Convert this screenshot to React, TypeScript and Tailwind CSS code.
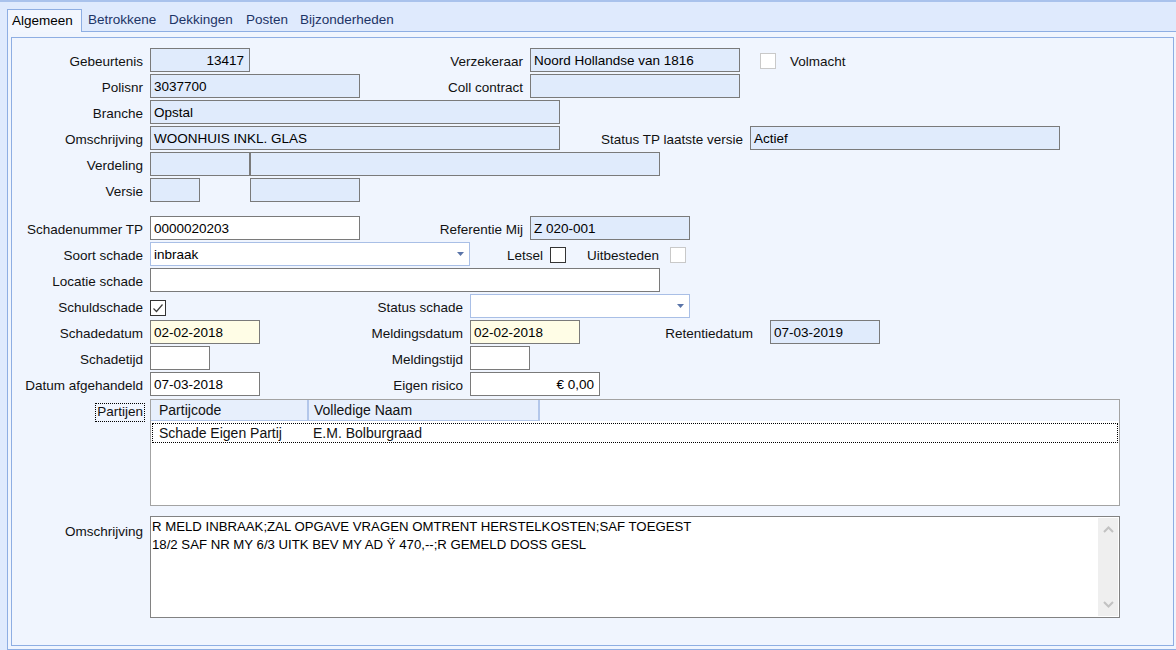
import React from "react";

const RO = "bg-[#e0ebfc] border-[#7a7a7a]";
const WH = "bg-white border-[#7a7a7a]";
const YE = "bg-[#fffde6] border-[#7a7a7a]";

function Lbl({ w, children, pr = "pr-[7px]" }: { w: string; children?: React.ReactNode; pr?: string }) {
  return (
    <div className={`${w} ${pr} shrink-0 h-[24px] pt-[4px] flex items-center justify-end whitespace-nowrap text-[#111]`}>
      {children}
    </div>
  );
}

function Box({ w, v, text, right, extra = "" }: { w: string; v: string; text?: string; right?: boolean; extra?: string }) {
  return (
    <div
      className={`${w} ${v} ${extra} shrink-0 h-[24px] border flex items-center px-[3px] leading-[15px] whitespace-nowrap overflow-hidden text-black ${
        right ? "justify-end pr-[5px]" : ""
      }`}
    >
      {text}
    </div>
  );
}

function Sel({ w }: { w: string }) {
  return (
    <div className={`${w} shrink-0 h-[24px] border border-[#a9bfe6] bg-white flex items-center justify-between pl-[3px] pr-[5px]`}>
      <span />
      <svg width="7" height="4" viewBox="0 0 7 4">
        <path d="M0 0 L7 0 L3.5 4 Z" fill="#5a74a8" />
      </svg>
    </div>
  );
}

function Chk({ dark, checked, extra = "" }: { dark?: boolean; checked?: boolean; extra?: string }) {
  return (
    <div
      className={`w-[16px] h-[16px] shrink-0 bg-white border ${dark ? "border-[#333]" : "border-[#c9c9c9]"} ${extra} flex items-center justify-center`}
    >
      {checked && (
        <svg width="12" height="12" viewBox="0 0 12 12">
          <path d="M1.5 6.5 L4.5 9.5 L10.5 2.5" fill="none" stroke="#3a3a3a" strokeWidth="1.2" />
        </svg>
      )}
    </div>
  );
}

function Row({ children, mt = "mt-[2px]" }: { children: React.ReactNode; mt?: string }) {
  return <div className={`flex items-start h-[24px] ${mt}`}>{children}</div>;
}

export default function App() {
  return (
    <div className="w-[1176px] h-[650px] overflow-hidden bg-[#dfeafd] border-t-2 border-[#a9c2ec] font-['Liberation_Sans',Arial,sans-serif] text-[13.5px]">
      {/* tabs */}
      <div className="h-[29px] flex items-end pl-[7px]">
        <div className="relative z-10 h-[23px] -mb-px w-[75px] border-t border-l border-r border-[#8eaee3] bg-[#f2f6fe] pl-[4px] flex items-center text-black">
          Algemeen
        </div>
        <div className="h-[22px] w-[81px] pl-[6px] flex items-center text-[#1d3466]">Betrokkene</div>
        <div className="h-[22px] w-[77px] pl-[6px] flex items-center text-[#1d3466]">Dekkingen</div>
        <div className="h-[22px] w-[54px] pl-[6px] flex items-center text-[#1d3466]">Posten</div>
        <div className="h-[22px] pl-[6px] flex items-center text-[#1d3466]">Bijzonderheden</div>
      </div>

      {/* outer panel */}
      <div className="ml-[7px] h-[619px] border-l border-t border-b border-[#8eaee3] bg-[#f0f5fe] pt-[5px] pl-[3px] pb-[3px] pr-[2px]">
        <div className="h-[609px] border border-[#8eaee3] bg-[#f0f5fe] pt-[10px]">
          <Row mt="mt-0">
            <Lbl w="w-[138px]">Gebeurtenis</Lbl>
            <Box w="w-[100px]" v={RO} text="13417" right />
            <Lbl w="w-[280px]">Verzekeraar</Lbl>
            <Box w="w-[210px]" v={RO} text="Noord Hollandse van 1816" />
            <Chk extra="ml-[20px] mt-[5px]" />
            <Lbl w="w-auto ml-[14px]" pr="pr-0">Volmacht</Lbl>
          </Row>
          <Row>
            <Lbl w="w-[138px]">Polisnr</Lbl>
            <Box w="w-[210px]" v={RO} text="3037700" />
            <Lbl w="w-[170px]">Coll contract</Lbl>
            <Box w="w-[210px]" v={RO} />
          </Row>
          <Row>
            <Lbl w="w-[138px]">Branche</Lbl>
            <Box w="w-[410px]" v={RO} text="Opstal" />
          </Row>
          <Row>
            <Lbl w="w-[138px]">Omschrijving</Lbl>
            <Box w="w-[410px]" v={RO} text="WOONHUIS INKL. GLAS" />
            <Lbl w="w-[190px]">Status TP laatste versie</Lbl>
            <Box w="w-[310px]" v={RO} text="Actief" />
          </Row>
          <Row>
            <Lbl w="w-[138px]">Verdeling</Lbl>
            <Box w="w-[100px]" v={RO} />
            <Box w="w-[410px]" v={RO} />
          </Row>
          <Row>
            <Lbl w="w-[138px]">Versie</Lbl>
            <Box w="w-[50px]" v={RO} />
            <Box w="w-[110px]" v={RO} extra="ml-[50px]" />
          </Row>

          <Row mt="mt-[14px]">
            <Lbl w="w-[138px]">Schadenummer TP</Lbl>
            <Box w="w-[210px]" v={WH} text="0000020203" />
            <Lbl w="w-[170px]">Referentie Mij</Lbl>
            <Box w="w-[160px]" v={RO} text="Z 020-001" />
          </Row>
          <Row>
            <Lbl w="w-[138px]">Soort schade</Lbl>
            <div className="w-[320px] shrink-0 h-[24px] border border-[#a9bfe6] bg-white flex items-center justify-between pl-[3px] pr-[5px] leading-[15px]">
              <span>inbraak</span>
              <svg width="7" height="4" viewBox="0 0 7 4">
                <path d="M0 0 L7 0 L3.5 4 Z" fill="#5a74a8" />
              </svg>
            </div>
            <Lbl w="w-[80px]">Letsel</Lbl>
            <Chk dark extra="mt-[5px]" />
            <Lbl w="w-[104px]" pr="pr-[11px]">Uitbesteden</Lbl>
            <Chk extra="mt-[5px]" />
          </Row>
          <Row>
            <Lbl w="w-[138px]">Locatie schade</Lbl>
            <Box w="w-[510px]" v={WH} />
          </Row>
          <Row>
            <Lbl w="w-[138px]">Schuldschade</Lbl>
            <Chk dark checked extra="mt-[6px]" />
            <Lbl w="w-[304px]">Status schade</Lbl>
            <Sel w="w-[220px]" />
          </Row>
          <Row>
            <Lbl w="w-[138px]">Schadedatum</Lbl>
            <Box w="w-[110px]" v={YE} text="02-02-2018" />
            <Lbl w="w-[210px]">Meldingsdatum</Lbl>
            <Box w="w-[110px]" v={YE} text="02-02-2018" />
            <Lbl w="w-[190px]" pr="pr-[17px]">Retentiedatum</Lbl>
            <Box w="w-[110px]" v={RO} text="07-03-2019" />
          </Row>
          <Row>
            <Lbl w="w-[138px]">Schadetijd</Lbl>
            <Box w="w-[60px]" v={WH} />
            <Lbl w="w-[260px]">Meldingstijd</Lbl>
            <Box w="w-[60px]" v={WH} />
          </Row>
          <Row>
            <Lbl w="w-[138px]">Datum afgehandeld</Lbl>
            <Box w="w-[110px]" v={WH} text="07-03-2018" />
            <Lbl w="w-[210px]">Eigen risico</Lbl>
            <Box w="w-[130px]" v={WH} text="€ 0,00" right />
          </Row>

          {/* Partijen grid */}
          <div className="flex items-start mt-[3px]">
            <div className="w-[138px] shrink-0 flex justify-end pr-[5px] pt-[4px]">
              <span className="border border-dotted border-black px-[1px] h-[19px] flex items-center text-[#111]">Partijen</span>
            </div>
            <div className="w-[970px] h-[107px] shrink-0 border border-[#a3a3a3] bg-white flex flex-col text-[14px]">
              <div className="h-[21px] flex bg-[#f0f5fe] shrink-0">
                <div className="w-[158px] bg-[#e7effc] border-r-2 border-b border-[#b3c7ea] pl-[8px] flex items-center text-[#111]">
                  Partijcode
                </div>
                <div className="w-[231px] bg-[#e7effc] border-r-2 border-b border-[#b3c7ea] pl-[5px] flex items-center text-[#111]">
                  Volledige Naam
                </div>
              </div>
              <div className="mt-[2px] mx-[1px] h-[20px] border border-dotted border-black flex items-center pl-[6px] text-[#111]">
                <span className="w-[154px]">Schade Eigen Partij</span>
                <span>E.M. Bolburgraad</span>
              </div>
            </div>
          </div>

          {/* Omschrijving textarea */}
          <div className="flex items-start mt-[10px]">
            <div className="w-[138px] shrink-0 pr-[7px] pt-[6px] text-right text-[#111]">Omschrijving</div>
            <div className="w-[970px] h-[102px] shrink-0 border border-[#828282] bg-white flex">
              <div className="flex-1 pl-[1px] pt-[1px] leading-[18px] text-black whitespace-pre text-[13.2px]">
                {"R MELD INBRAAK;ZAL OPGAVE VRAGEN OMTRENT HERSTELKOSTEN;SAF TOEGEST\n18/2 SAF NR MY 6/3 UITK BEV MY AD Ÿ 470,--;R GEMELD DOSS GESL"}
              </div>
              <div className="w-[20px] my-[1px] mr-[1px] bg-[#efefef] flex flex-col items-center justify-between py-[8px]">
                <svg width="11" height="7" viewBox="0 0 11 7">
                  <path d="M1 6 L5.5 1.5 L10 6" fill="none" stroke="#c2c2c2" strokeWidth="2" />
                </svg>
                <svg width="11" height="7" viewBox="0 0 11 7">
                  <path d="M1 1 L5.5 5.5 L10 1" fill="none" stroke="#c2c2c2" strokeWidth="2" />
                </svg>
              </div>
            </div>
          </div>
        </div>
      </div>
    </div>
  );
}
